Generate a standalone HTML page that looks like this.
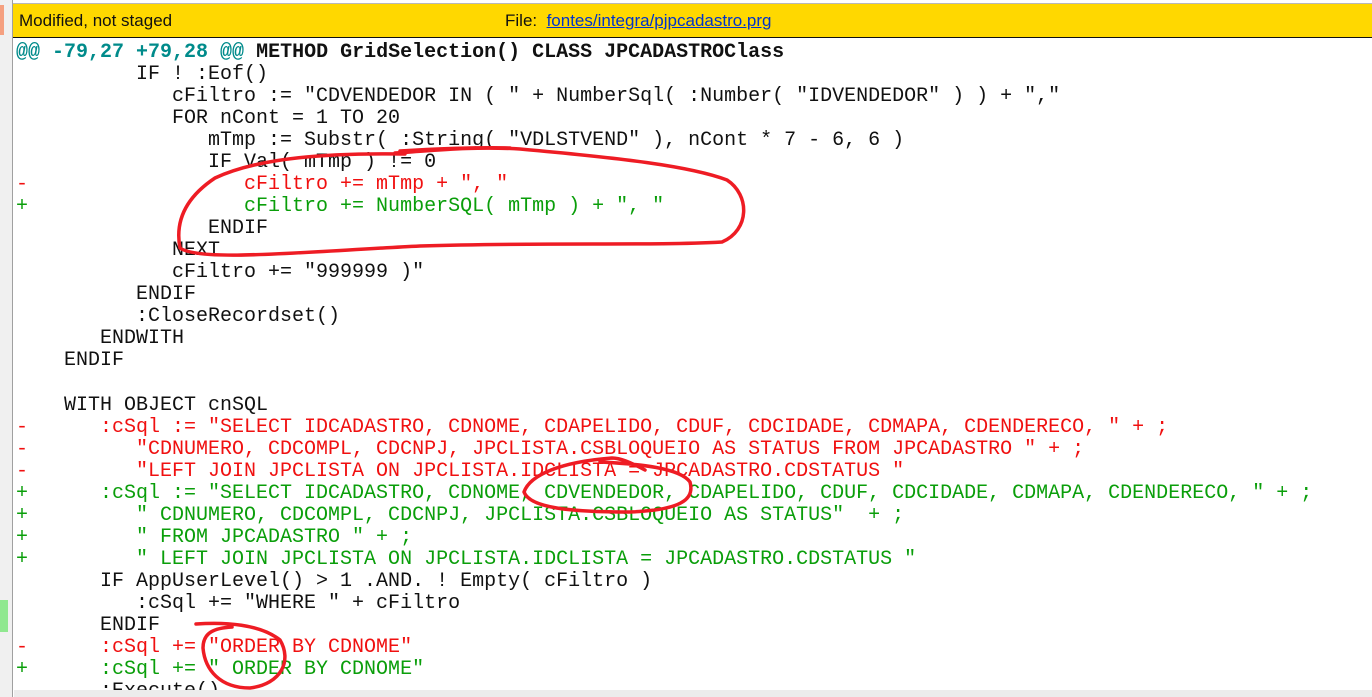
<!DOCTYPE html>
<html><head><meta charset="utf-8"><style>
html,body{margin:0;padding:0;width:1372px;height:697px;overflow:hidden;background:#fff;position:relative}
#left{position:absolute;left:0;top:0;width:12px;height:697px;background:#f0f0f0;border-right:1px solid #a0a0a0}
#bar{position:absolute;left:13px;top:3px;width:1359px;height:33px;background:#ffd800;border-top:1px solid #b8b8b8;border-bottom:1px solid #111;font-family:"Liberation Sans",sans-serif;font-size:17px;color:#111}
#bar span{position:absolute;top:7px}
#code{position:absolute;left:16px;top:41.5px;font-family:"Liberation Mono",monospace;font-size:20px;line-height:22.07px;white-space:pre;color:#111}
.h{color:#008b8b;font-weight:bold}.b{font-weight:bold}
.r{color:#f01010}.g{color:#0a9e0a}
#sc{position:absolute;left:14px;top:690px;width:1358px;height:7px;background:#ececec}
</style></head><body>
<div id="left"><div style="position:absolute;left:0;top:5px;width:4px;height:30px;background:#f5a080"></div><div style="position:absolute;left:0;top:600px;width:8px;height:32px;background:#90e890"></div></div>
<div id="bar"><span style="left:6px">Modified, not staged</span><span style="left:492px">File:&nbsp; <u style="color:#0033cc">fontes/integra/pjpcadastro.prg</u></span></div>
<div id="code"><span class="h">@@ -79,27 +79,28 @@</span> <span class="b">METHOD GridSelection() CLASS JPCADASTROClass</span>
          IF ! :Eof()
             cFiltro := "CDVENDEDOR IN ( " + NumberSql( :Number( "IDVENDEDOR" ) ) + ","
             FOR nCont = 1 TO 20
                mTmp := Substr( :String( "VDLSTVEND" ), nCont * 7 - 6, 6 )
                IF Val( mTmp ) != 0
<span class="r">-                  cFiltro += mTmp + ", "</span>
<span class="g">+                  cFiltro += NumberSQL( mTmp ) + ", "</span>
                ENDIF
             NEXT
             cFiltro += "999999 )"
          ENDIF
          :CloseRecordset()
       ENDWITH
    ENDIF

    WITH OBJECT cnSQL
<span class="r">-      :cSql := "SELECT IDCADASTRO, CDNOME, CDAPELIDO, CDUF, CDCIDADE, CDMAPA, CDENDERECO, " + ;</span>
<span class="r">-         "CDNUMERO, CDCOMPL, CDCNPJ, JPCLISTA.CSBLOQUEIO AS STATUS FROM JPCADASTRO " + ;</span>
<span class="r">-         "LEFT JOIN JPCLISTA ON JPCLISTA.IDCLISTA = JPCADASTRO.CDSTATUS "</span>
<span class="g">+      :cSql := "SELECT IDCADASTRO, CDNOME, CDVENDEDOR, CDAPELIDO, CDUF, CDCIDADE, CDMAPA, CDENDERECO, " + ;</span>
<span class="g">+         " CDNUMERO, CDCOMPL, CDCNPJ, JPCLISTA.CSBLOQUEIO AS STATUS"  + ;</span>
<span class="g">+         " FROM JPCADASTRO " + ;</span>
<span class="g">+         " LEFT JOIN JPCLISTA ON JPCLISTA.IDCLISTA = JPCADASTRO.CDSTATUS "</span>
       IF AppUserLevel() &gt; 1 .AND. ! Empty( cFiltro )
          :cSql += "WHERE " + cFiltro
       ENDIF
<span class="r">-      :cSql += "ORDER BY CDNOME"</span>
<span class="g">+      :cSql += " ORDER BY CDNOME"</span>
       :Execute()</div>
<div id="sc"></div>
<svg style="position:absolute;left:0;top:0" width="1372" height="697" fill="none" stroke="#ee1c24" stroke-width="3.5" stroke-linecap="round" stroke-linejoin="round">
<path d="M400 151 C430 149 480 147 510 148"/>
<path d="M405 154 C330 153 260 157 215 178 C185 198 175 222 180 248 C200 262 300 252 420 246 C550 242 650 246 722 242 C750 230 750 195 727 180 C690 166 620 158 520 149 C470 146 430 151 395 153"/>
<path d="M645 470 C630 462 620 458 612 458 C560 462 530 475 524 492 C530 508 570 512 630 512 C680 510 695 500 690 482 C680 468 640 464 600 462"/>
<path d="M196 624 C225 622 260 624 280 640 C292 660 282 684 250 688 C220 688 205 670 203 648 C203 632 215 628 232 627"/>
</svg>
</body></html>
